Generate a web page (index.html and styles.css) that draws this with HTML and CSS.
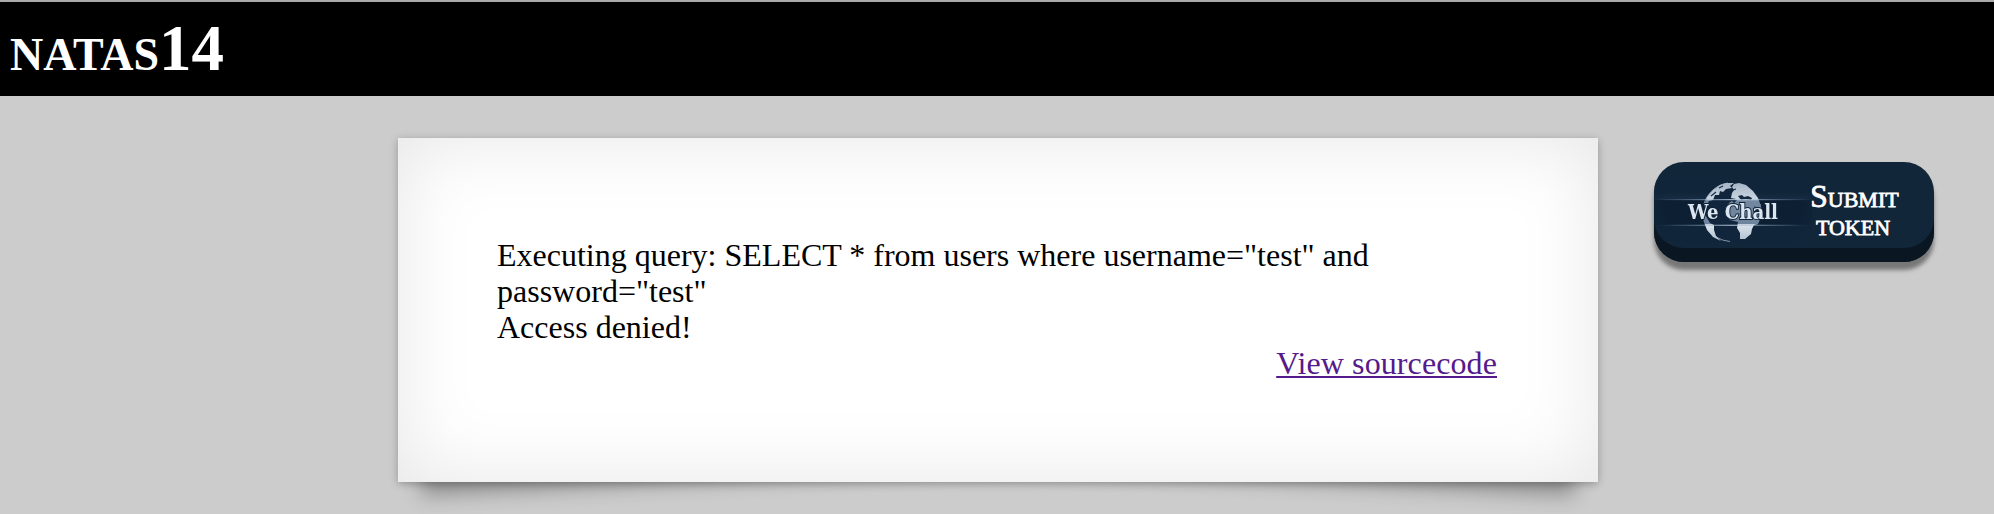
FILE: index.html
```
<!DOCTYPE html>
<html lang="en">
<head>
<meta charset="utf-8">
<title>natas14</title>
<link rel="stylesheet" href="styles.css">
</head>
<body>
<h1 class="title">natas14</h1>
<main class="page">
  <section class="card">
    <div class="card-body">
      <p class="message">Executing query: SELECT * from users where username="test" and password="test"<br>Access denied!</p>
      <div class="source"><a class="source-link" href="#">View sourcecode</a></div>
    </div>
  </section>
  <button class="submit" type="button">
    <svg class="logo" viewBox="0 0 158 60" width="158" height="60" role="img" aria-label="We Chall">
      <defs>
        <linearGradient id="ray" x1="0" x2="1" y1="0" y2="0">
          <stop offset="0" stop-color="#7f9bb5" stop-opacity="0"/>
          <stop offset=".5" stop-color="#b4c8da" stop-opacity=".85"/>
          <stop offset="1" stop-color="#7f9bb5" stop-opacity="0"/>
        </linearGradient>
        <linearGradient id="glow" x1="0" x2="0" y1="0" y2="1">
          <stop offset="0" stop-color="#1d3650" stop-opacity="0"/>
          <stop offset="1" stop-color="#2b4763" stop-opacity=".7"/>
        </linearGradient>
        <linearGradient id="land" gradientUnits="userSpaceOnUse" x1="0" x2="0" y1="0" y2="60">
          <stop offset="0" stop-color="#a3b3c5"/>
          <stop offset=".3" stop-color="#ccd7e2"/>
          <stop offset=".31" stop-color="#7387a0"/>
          <stop offset=".7" stop-color="#6f849d"/>
          <stop offset=".71" stop-color="#dce4ec"/>
          <stop offset="1" stop-color="#aebdcd"/>
        </linearGradient>
      </defs>
      <rect width="158" height="60" fill="#11253a"/>
      <rect y="18" width="158" height="25" fill="#0c1f33"/>
      <rect y="10" width="158" height="8" fill="url(#glow)" opacity=".4"/>
      <circle cx="78" cy="30" r="29" fill="#11263c"/>
      <path fill="none" stroke="#8da0b4" stroke-width=".9" d="M50 22A29.500 29.500 0 0 1 74 1M52 44A29.500 29.500 0 0 0 76 59.500M106 22A29.500 29.500 0 0 1 107 36"/>
      <path fill="url(#land)" d="M50 24 53 15 59 8 66 3 72 1 80 1 76 4 78 6 72 7 69 10 66 9 65 13 61 13 59 18 55 19 52 25ZM80 2 85 1 92 3 99 9 104 16 107 24 107.500 34 104 42 100 43 98 47 97 52 91 57 86 57 86 51 83 46 84 40 76 38 71 33 71 26 76 20 82 17 77 16 78 11 80 8 78 5ZM49 30 53 36 56 41 60 43 60 48 62 54 67 59 59 55 53 48 49.500 39Z"/>
      <path fill="#142a41" d="M84 14 88 13 90 15 94 14 98 16 97 18 92 17 87 18ZM77 18 83 18 80 21ZM100 24 105 27 103 31Z"/>
      <path stroke="#142a41" stroke-width="1.200" fill="none" d="M57 14 62 10M65 6 69 4M79 8 82 7"/>
      <rect y="17" width="158" height="1.200" fill="url(#ray)"/>
      <rect y="42.700" width="158" height="1.200" fill="url(#ray)"/>
      <text class="logo-text" x="34" y="37" textLength="90" lengthAdjust="spacingAndGlyphs">We Chall</text>
    </svg>
    <span class="submit-label">Submit token</span>
  </button>
</main>
</body>
</html>
```
FILE: styles.css
```
body {
  margin: 0;
  height: 514px;
  overflow: hidden;
  background: #ccc;
  font: 32px/36px "Liberation Serif", "Times New Roman", serif;
  color: #000;
}
.title {
  box-sizing: border-box;
  height: 96px;
  margin: 0;
  padding: 9px 10px 0;
  border-top: 2px solid #a9abab;
  background: #000;
  color: #fff;
  font-size: 65px;
  line-height: 74px;
  font-variant: small-caps;
}
.page {
  display: flex;
  align-items: flex-start;
  padding: 42px 60px 0 398px;
}
.card {
  position: relative;
  width: 1200px;
}
.card::before,
.card::after {
  content: "";
  position: absolute;
  z-index: -1;
  bottom: 30px;
  left: 20px;
  width: 50%;
  height: 20%;
  box-shadow: 0 28px 20px rgba(0, 0, 0, .3);
  transform: rotate(-3deg);
}
.card::after {
  left: auto;
  right: 20px;
  transform: rotate(3deg);
}
.card-body {
  box-sizing: border-box;
  height: 344px;
  padding: 99px 101px 0 99px;
  background: #fff;
  box-shadow: 0 2px 8px rgba(0, 0, 0, .27), inset 0 0 80px rgba(0, 0, 0, .1);
}
.message {
  margin: 0;
}
.source {
  text-align: right;
}
.source-link {
  color: #551a8b;
  letter-spacing: .1px;
  text-decoration-thickness: 2px;
  text-underline-offset: 2px;
}
.submit {
  display: flex;
  align-items: flex-start;
  overflow: hidden;
  width: 280px;
  height: 100px;
  margin: 24px 0 0 56px;
  padding: 20px 0 0;
  border: 0;
  border-radius: 30px;
  background: #12263a;
  box-shadow: inset 0 -14px #0a1622, 0 8px 4px #777;
  color: #fff;
  font: 32px/28px "Liberation Serif", "Times New Roman", serif;
  font-variant: small-caps;
}
.logo {
  flex: none;
  -webkit-mask: radial-gradient(ellipse 90px 90px at 79px 10px, #000 75%, transparent 100%);
  mask: radial-gradient(ellipse 90px 90px at 79px 10px, #000 75%, transparent 100%);
}
.logo-text {
  fill: #dbe6f1;
  stroke: #0e2135;
  stroke-width: 2px;
  paint-order: stroke;
  font: bold 20px "DejaVu Serif", serif;
  font-variant: normal;
}
.submit-label {
  width: 86px;
  margin: -.5px 0 0 -2px;
  text-align: center;
  -webkit-text-stroke: .8px #fff;
}
```
